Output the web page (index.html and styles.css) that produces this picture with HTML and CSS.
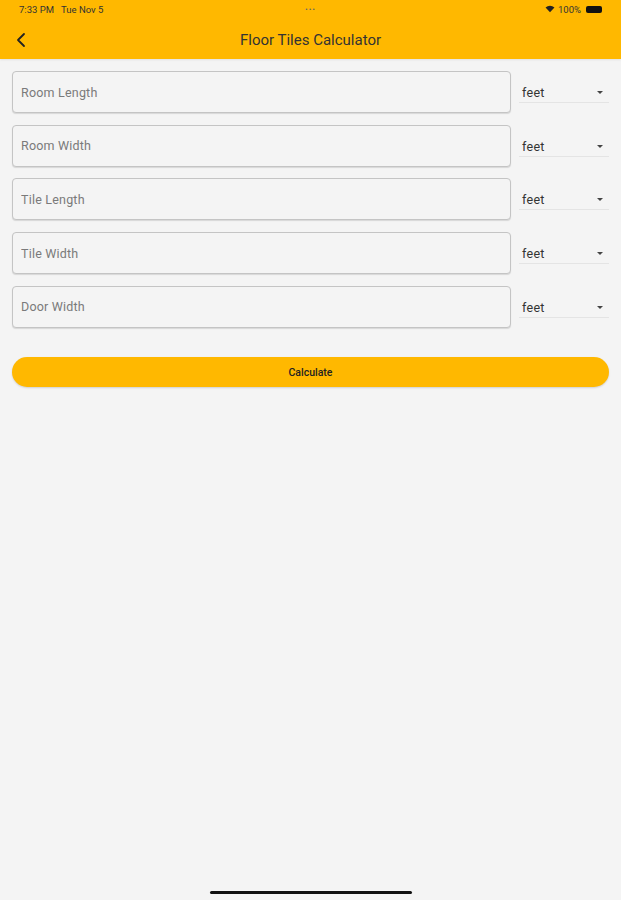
FILE: index.html
```html
<!DOCTYPE html>
<html lang="en">
<head>
  <meta charset="UTF-8" />
  <meta name="viewport" content="width=device-width, initial-scale=1" />
  <title>Floor Tiles Calculator</title>
  <link rel="stylesheet" href="styles.css">
</head>
<body>

  <div class="app">
    <!-- Header with status bar -->
    <header class="top">
      <div class="status">
        <span class="status-left">7:33 PM&nbsp;&nbsp;&nbsp;Tue Nov 5</span>
        <span class="status-dots">&bull;&bull;&bull;</span>
        <span class="status-right">
          <svg width="10" height="8" viewBox="0 0 9 7"><path d="M0.5 2.2 A6 6 0 0 1 8.5 2.2 L4.5 6.5 Z" fill="#222"/></svg>
          100%
          <span class="battery"></span>
        </span>
      </div>
      <div class="nav">
        <svg class="back" width="12" height="16" viewBox="0 0 12 16"><path d="M9 2 L3 8 L9 14" fill="none" stroke="#222" stroke-width="1.8" stroke-linecap="round" stroke-linejoin="round"/></svg>
        <h1>Floor Tiles Calculator</h1>
      </div>
    </header>

    <!-- Input rows -->
    <main class="form">
      <div class="row">
        <input type="text" placeholder="Room Length" />
        <div class="unit">feet <span class="caret"></span></div>
      </div>
      <div class="row">
        <input type="text" placeholder="Room Width" />
        <div class="unit">feet <span class="caret"></span></div>
      </div>
      <div class="row">
        <input type="text" placeholder="Tile Length" />
        <div class="unit">feet <span class="caret"></span></div>
      </div>
      <div class="row">
        <input type="text" placeholder="Tile Width" />
        <div class="unit">feet <span class="caret"></span></div>
      </div>
      <div class="row">
        <input type="text" placeholder="Door Width" />
        <div class="unit">feet <span class="caret"></span></div>
      </div>

      <button type="button" class="calc">Calculate</button>
    </main>

    <div class="home-bar"></div>
  </div>

</body>
</html>
```

FILE: styles.css
```css
body {
  margin: 0;
  font-family: Roboto, "Liberation Sans", Arial, sans-serif;
  background: #f4f4f4;
  color: #222;
}

.app {
  height: 900px;
  display: flex;
  flex-direction: column;
}

.top {
  background: #ffb800;
  height: 59px;
  box-shadow: 0 1px 2px rgba(0,0,0,0.08);
}

.status {
  display: flex;
  justify-content: space-between;
  align-items: center;
  height: 18px;
  padding: 0 19px;
  font-size: 9.5px;
  color: #333;
}

.status-left,
.status-right {
  width: 110px;
}

.status-right {
  display: flex;
  justify-content: flex-end;
  align-items: center;
  gap: 3px;
}

.status-dots {
  font-size: 8px;
  letter-spacing: 1px;
  color: #666;
}

.battery {
  display: inline-block;
  width: 16px;
  height: 7px;
  background: #111;
  border-radius: 2px;
  margin-left: 2px;
}

.nav {
  position: relative;
  display: flex;
  align-items: center;
  justify-content: center;
  height: 41px;
  padding-top: 2px;
  box-sizing: border-box;
}

.nav .back {
  position: absolute;
  left: 15px;
  top: 14px;
}

.nav h1 {
  margin: 0;
  font-size: 15px;
  font-weight: 400;
  color: #333;
}

.form {
  padding: 12px 12px 0 12px;
  display: flex;
  flex-direction: column;
  gap: 11.7px;
}

.row {
  display: flex;
  align-items: flex-start;
  gap: 8px;
}

.row input {
  flex: 1;
  height: 42px;
  box-sizing: border-box;
  margin: 0;
  padding: 0 8px;
  border: 1px solid #c4c4c4;
  border-radius: 4px;
  background: #f4f4f4;
  box-shadow: 0 1px 1px rgba(0,0,0,0.12);
  font-family: inherit;
  font-size: 12.5px;
  letter-spacing: 0.2px;
  color: #333;
  outline: none;
}

.row input::placeholder {
  color: #7a7a7a;
}

.unit {
  width: 90px;
  height: 32px;
  box-sizing: border-box;
  display: flex;
  align-items: center;
  justify-content: space-between;
  padding: 12px 6px 0 3px;
  border-bottom: 1px solid #e4e4e4;
  font-size: 12.5px;
  letter-spacing: 0.3px;
  color: #333;
}

.caret {
  width: 0;
  height: 0;
  border-left: 3px solid transparent;
  border-right: 3px solid transparent;
  border-top: 3px solid #444;
}

.calc {
  margin-top: 18px;
  height: 30px;
  width: 597px;
  border: none;
  border-radius: 15px;
  background: #ffb800;
  box-shadow: 0 1px 2px rgba(0,0,0,0.15);
  font-family: inherit;
  font-size: 10.5px;
  font-weight: 500;
  color: #222;
  cursor: pointer;
}

.home-bar {
  margin: auto auto 6px auto;
  width: 202px;
  height: 3px;
  border-radius: 2px;
  background: #111;
}
```
